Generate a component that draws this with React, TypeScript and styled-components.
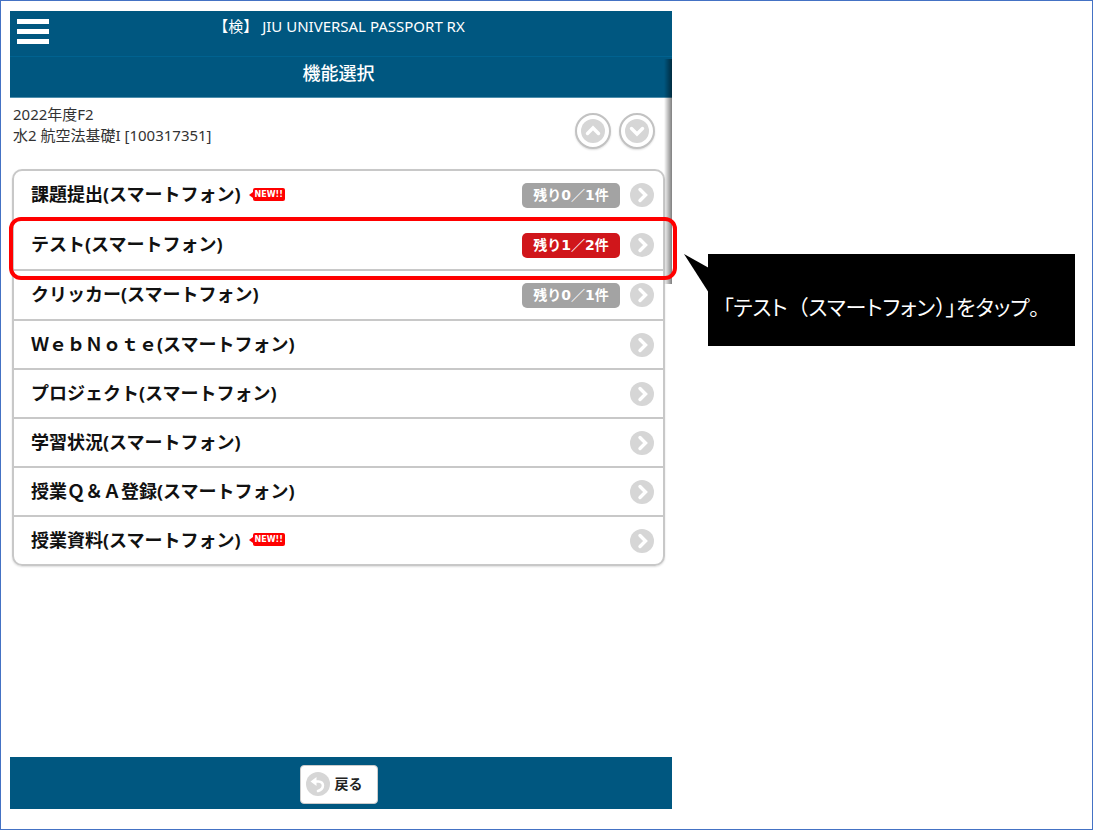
import React from "react";
import styled, { createGlobalStyle } from "styled-components";

const GlobalStyle = createGlobalStyle`
  *, *::before, *::after { box-sizing: border-box; }
  body {
    margin: 0;
    background: #fff;
    color: #111;
    font-family: "Noto Sans", "Noto Sans CJK JP", sans-serif;
  }
`;

const Frame = styled.main`
  display: grid;
  grid-template-columns: 662fr 403fr;
  min-height: 100vh;
  padding: 10px 17px 20px 9px;
  border: 1px solid #4472c4;
`;

const Phone = styled.section`
  position: relative;
  display: flex;
  flex-direction: column;
  min-width: 0;
`;

const TopBar = styled.header`
  display: grid;
  grid-template-columns: 32px 1fr 32px;
  align-items: start;
  height: 46px;
  padding: 5px 7px;
  background: #005780;
  border-bottom: 1px solid #006290;
  color: #fff;
`;

const MenuButton = styled.button`
  display: flex;
  flex-direction: column;
  gap: 5px;
  width: 32px;
  margin: 3px 0 0;
  padding: 0;
  border: 0;
  background: none;
`;

const MenuBar = styled.span`
  height: 5px;
  width: 32px;
  background: #fff;
`;

const SiteName = styled.h1`
  margin: 0;
  font-size: 15px;
  line-height: 20px;
  font-weight: 400;
  text-align: center;
  padding-right: 4px;
`;

const ScreenTitle = styled.h2`
  height: 41px;
  margin: 0;
  padding: 3px 5px 0 0;
  background: #005780;
  border-bottom: 1px solid #4f8fad;
  color: #fff;
  font-size: 18px;
  line-height: 26px;
  font-weight: 500;
  text-align: center;
`;

const CourseBar = styled.div`
  display: flex;
  justify-content: space-between;
  align-items: flex-start;
  height: 71px;
  padding: 6px 17px 0 3px;
`;

const CourseText = styled.p`
  margin: 0;
  color: #333;
  font-size: 15px;
  line-height: 21px;
`;

const StepButtons = styled.div`
  display: flex;
  gap: 8px;
  padding-top: 9px;
`;

const StepButton = styled.button`
  display: grid;
  place-items: center;
  width: 36px;
  height: 36px;
  padding: 0;
  border: 2px solid #c2c2c2;
  border-radius: 50%;
  background: #fff;
  box-shadow: 0 1px 2px #ddd;
`;

const Menu = styled.ul`
  margin: 0 7px 0 2px;
  padding: 0;
  list-style: none;
  border: 2px solid #c8c8c8;
  border-radius: 10px;
  box-shadow: 0 1px 2px #ddd;
`;

const MenuItem = styled.li<{ $counted: boolean }>`
  position: relative;
  height: ${(p) => (p.$counted ? 50 : 49)}px;
  border-bottom: 2px solid #c8c8c8;
  &:last-child { height: 47px; border-bottom: 0; }
`;

const MenuLink = styled.a`
  display: flex;
  align-items: center;
  height: 100%;
  padding: 0 9px 0 17px;
  color: #111;
  text-decoration: none;
`;

const ItemName = styled.span`
  padding-bottom: 2px;
  font-size: 18px;
  line-height: 24px;
  font-weight: 700;
  white-space: nowrap;
`;

const NewTag = styled.span`
  position: relative;
  width: 32px;
  height: 13px;
  margin: 0 auto 2px 12px;
  border-radius: 2px;
  background: #f00;
  color: #fff;
  font-family: "DejaVu Sans", sans-serif;
  font-size: 8px;
  line-height: 13px;
  font-weight: 700;
  text-align: center;
  &::before {
    content: "";
    position: absolute;
    left: -4px;
    top: 4px;
    border: solid transparent;
    border-width: 3px 4px 3px 0;
    border-right-color: #f00;
  }
`;

const ItemEnd = styled.span`
  display: flex;
  align-items: center;
  gap: 10px;
  margin-left: auto;
`;

const Count = styled.span<{ $active: boolean }>`
  width: 98px;
  height: 25px;
  border-radius: 5px;
  background: ${(p) => (p.$active ? "#d0161b" : "#a3a3a3")};
  color: #fff;
  font-family: "DejaVu Sans", "Noto Sans CJK JP", sans-serif;
  font-size: 14px;
  line-height: 24px;
  font-weight: 700;
  text-align: center;
  white-space: nowrap;
`;

const Highlight = styled.span`
  position: absolute;
  z-index: 2;
  inset: -4px -14px -11px -5px;
  border: 4px solid #f00;
  border-radius: 12px;
  pointer-events: none;
`;

const EdgeShadow = styled.div`
  position: absolute;
  right: 0;
  top: 48px;
  width: 8px;
  height: 225px;
  background: linear-gradient(to right, rgba(0, 0, 0, 0), rgba(0, 0, 0, 0.5));
`;

const BottomBar = styled.footer`
  display: flex;
  justify-content: center;
  align-items: center;
  height: 52px;
  margin-top: auto;
  padding: 2px 5px 0 0;
  background: #005780;
`;

const BackButton = styled.button`
  display: flex;
  align-items: center;
  gap: 5px;
  width: 78px;
  height: 39px;
  padding: 0 0 0 5px;
  border: 1px solid #ccc;
  border-radius: 4px;
  background: #fff;
  color: #222;
  font-family: inherit;
  font-size: 14px;
  line-height: 20px;
  font-weight: 700;
  white-space: nowrap;
`;

const Side = styled.aside`
  padding: 243px 0 0 36px;
`;

const Callout = styled.p`
  position: relative;
  height: 92px;
  margin: 0;
  padding: 37px 0 0 15px;
  background: #000;
  color: #fff;
  font-family: "Noto Sans CJK JP", sans-serif;
  font-size: 21px;
  line-height: 30px;
  font-weight: 400;
  font-feature-settings: "palt";
  white-space: nowrap;
`;

const FullWidth = styled.span`
  font-feature-settings: normal;
`;

const Pointer = styled.svg`
  position: absolute;
  left: -24px;
  top: 0;
`;

const Disc = styled.svg`
  display: block;
  flex: none;
`;

const glyphs = {
  right: "M10 6.5 L15.5 12 L10 17.5",
  up: "M6.5 14.5 L12 9 L17.5 14.5",
  down: "M6.5 9.5 L12 15 L17.5 9.5",
};

function DiscIcon({ glyph }: { glyph: keyof typeof glyphs }) {
  return (
    <Disc width="24" height="24" viewBox="0 0 24 24" aria-hidden="true">
      <circle cx="12" cy="12" r="12" fill="#d6d6d6" />
      <path d={glyphs[glyph]} fill="none" stroke="#fff" strokeWidth="3.4" strokeLinecap="round" />
    </Disc>
  );
}

function BackIcon() {
  return (
    <Disc width="24" height="24" viewBox="0 0 24 24" aria-hidden="true">
      <circle cx="12" cy="12" r="12" fill="#d6d6d6" />
      <path d="M4.5 9.5 L10.5 5 V14 Z" fill="#fff" />
      <path d="M9 9.5 H12.5 C18.5 9.5 18.5 17 12 19" fill="none" stroke="#fff" strokeWidth="2.6" strokeLinecap="round" />
    </Disc>
  );
}

interface Item {
  name: string;
  isNew?: boolean;
  count?: string;
  active?: boolean;
}

const items: Item[] = [
  { name: "課題提出(スマートフォン)", isNew: true, count: "残り0／1件" },
  { name: "テスト(スマートフォン)", count: "残り1／2件", active: true },
  { name: "クリッカー(スマートフォン)", count: "残り0／1件" },
  { name: "ＷｅｂＮｏｔｅ(スマートフォン)" },
  { name: "プロジェクト(スマートフォン)" },
  { name: "学習状況(スマートフォン)" },
  { name: "授業Ｑ＆Ａ登録(スマートフォン)" },
  { name: "授業資料(スマートフォン)", isNew: true },
];

export default function App() {
  return (
    <Frame lang="ja">
      <GlobalStyle />
      <Phone>
        <TopBar>
          <MenuButton type="button" aria-label="メニュー">
            <MenuBar />
            <MenuBar />
            <MenuBar />
          </MenuButton>
          <SiteName>【検】 JIU UNIVERSAL PASSPORT RX</SiteName>
        </TopBar>
        <ScreenTitle>機能選択</ScreenTitle>
        <CourseBar>
          <CourseText>
            2022年度F2
            <br />
            水2 航空法基礎I [100317351]
          </CourseText>
          <StepButtons>
            <StepButton type="button" aria-label="前へ">
              <DiscIcon glyph="up" />
            </StepButton>
            <StepButton type="button" aria-label="次へ">
              <DiscIcon glyph="down" />
            </StepButton>
          </StepButtons>
        </CourseBar>
        <Menu>
          {items.map((item) => (
            <MenuItem key={item.name} $counted={Boolean(item.count)}>
              <MenuLink href="#">
                <ItemName>{item.name}</ItemName>
                {item.isNew && <NewTag>NEW!!</NewTag>}
                <ItemEnd>
                  {item.count && <Count $active={Boolean(item.active)}>{item.count}</Count>}
                  <DiscIcon glyph="right" />
                </ItemEnd>
              </MenuLink>
              {item.active && <Highlight />}
            </MenuItem>
          ))}
        </Menu>
        <EdgeShadow />
        <BottomBar>
          <BackButton type="button">
            <BackIcon />
            戻る
          </BackButton>
        </BottomBar>
      </Phone>
      <Side>
        <Callout>
          <Pointer width="25" height="40" viewBox="0 0 25 40" aria-hidden="true">
            <path d="M0 0 L25 14 V39 Z" fill="#000" />
          </Pointer>
          「テスト<FullWidth>（</FullWidth>スマートフォン<FullWidth>）</FullWidth>」をタップ。
        </Callout>
      </Side>
    </Frame>
  );
}
